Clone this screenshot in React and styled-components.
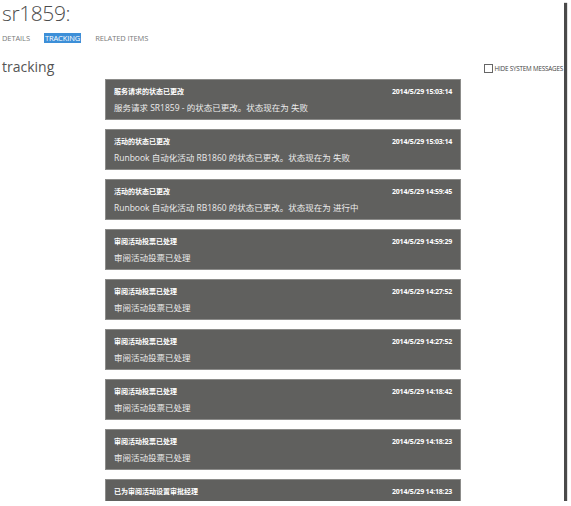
import React, { useState } from "react";
import styled, { createGlobalStyle } from "styled-components";

const GlobalStyle = createGlobalStyle`
  body {
    margin: 0;
    background: #fff;
    font-family: "Open Sans", "Noto Sans CJK SC", sans-serif;
  }
`;

const Frame = styled.div`
  width: 564px;
  height: 501px;
  overflow: hidden;
  background: #fff;
  box-shadow: 3px 3px 1px #4a4a4a;
`;

const Title = styled.h1`
  margin: 0;
  padding: 0 0 0 2px;
  font-size: 21px;
  font-weight: 300;
  line-height: 26px;
  color: #4b4b4b;
  letter-spacing: -0.4px;
`;

const Tabs = styled.div`
  display: flex;
  gap: 13px;
  padding: 6px 0 0 1px;
  height: 12px;
  align-items: center;
`;

const Tab = styled.span`
  font-size: 7.5px;
  line-height: 10px;
  padding: 0 1px;
  letter-spacing: -0.1px;
  color: ${(p) => (p.$active ? "#fff" : "#7a7a7a")};
  background: ${(p) => (p.$active ? "#3d8fd8" : "transparent")};
  cursor: pointer;
`;

const SectionRow = styled.div`
  display: flex;
  justify-content: space-between;
  align-items: flex-start;
  padding: 15px 1px 0 2px;
  height: 20px;
`;

const SectionTitle = styled.div`
  font-size: 14px;
  color: #555;
  line-height: 16px;
`;

const HideToggle = styled.label`
  display: flex;
  align-items: center;
  gap: 2px;
  margin-top: 5px;
  font-size: 6.3px;
  color: #444;
  letter-spacing: -0.2px;
  cursor: pointer;
`;

const Box = styled.span`
  width: 7px;
  height: 7px;
  border: 1px solid #666;
  background: #fff;
`;

const Feed = styled.div`
  display: flex;
  flex-direction: column;
  gap: 9px;
  margin-left: 105px;
  width: 356px;
`;

const Card = styled.div`
  background: #60605e;
  border: 1px solid #8c8c8a;
  padding: 5px 8px 0 8px;
  box-sizing: border-box;
  height: 41px;
`;

const CardHead = styled.div`
  display: flex;
  justify-content: space-between;
  align-items: center;
  height: 12px;
`;

const CardTitle = styled.span`
  color: #fff;
  font-size: 7px;
  font-weight: 700;
`;

const CardDate = styled.span`
  color: #fff;
  font-size: 7px;
  font-weight: 700;
  letter-spacing: -0.2px;
`;

const CardBody = styled.div`
  color: #ececec;
  font-size: 8.5px;
  margin-top: 5px;
  line-height: 12px;
`;

const items = [
  ["服务请求的状态已更改", "2014/5/29 15:03:14", "服务请求 SR1859 - 的状态已更改。状态现在为 失败"],
  ["活动的状态已更改", "2014/5/29 15:03:14", "Runbook 自动化活动 RB1860 的状态已更改。状态现在为 失败"],
  ["活动的状态已更改", "2014/5/29 14:59:45", "Runbook 自动化活动 RB1860 的状态已更改。状态现在为 进行中"],
  ["审阅活动投票已处理", "2014/5/29 14:59:29", "审阅活动投票已处理"],
  ["审阅活动投票已处理", "2014/5/29 14:27:52", "审阅活动投票已处理"],
  ["审阅活动投票已处理", "2014/5/29 14:27:52", "审阅活动投票已处理"],
  ["审阅活动投票已处理", "2014/5/29 14:18:42", "审阅活动投票已处理"],
  ["审阅活动投票已处理", "2014/5/29 14:18:23", "审阅活动投票已处理"],
  ["已为审阅活动设置审批经理", "2014/5/29 14:18:23", ""],
];

export default function App() {
  const [tab, setTab] = useState("TRACKING");
  return (
    <>
      <GlobalStyle />
      <Frame>
        <Title>sr1859:</Title>
        <Tabs>
          {["DETAILS", "TRACKING", "RELATED ITEMS"].map((t) => (
            <Tab key={t} $active={t === tab} onClick={() => setTab(t)}>
              {t}
            </Tab>
          ))}
        </Tabs>
        <SectionRow>
          <SectionTitle>tracking</SectionTitle>
          <HideToggle>
            <Box />
            HIDE SYSTEM MESSAGES
          </HideToggle>
        </SectionRow>
        <Feed>
          {items.map(([title, date, body], i) => (
            <Card key={i}>
              <CardHead>
                <CardTitle>{title}</CardTitle>
                <CardDate>{date}</CardDate>
              </CardHead>
              {body && <CardBody>{body}</CardBody>}
            </Card>
          ))}
        </Feed>
      </Frame>
    </>
  );
}
